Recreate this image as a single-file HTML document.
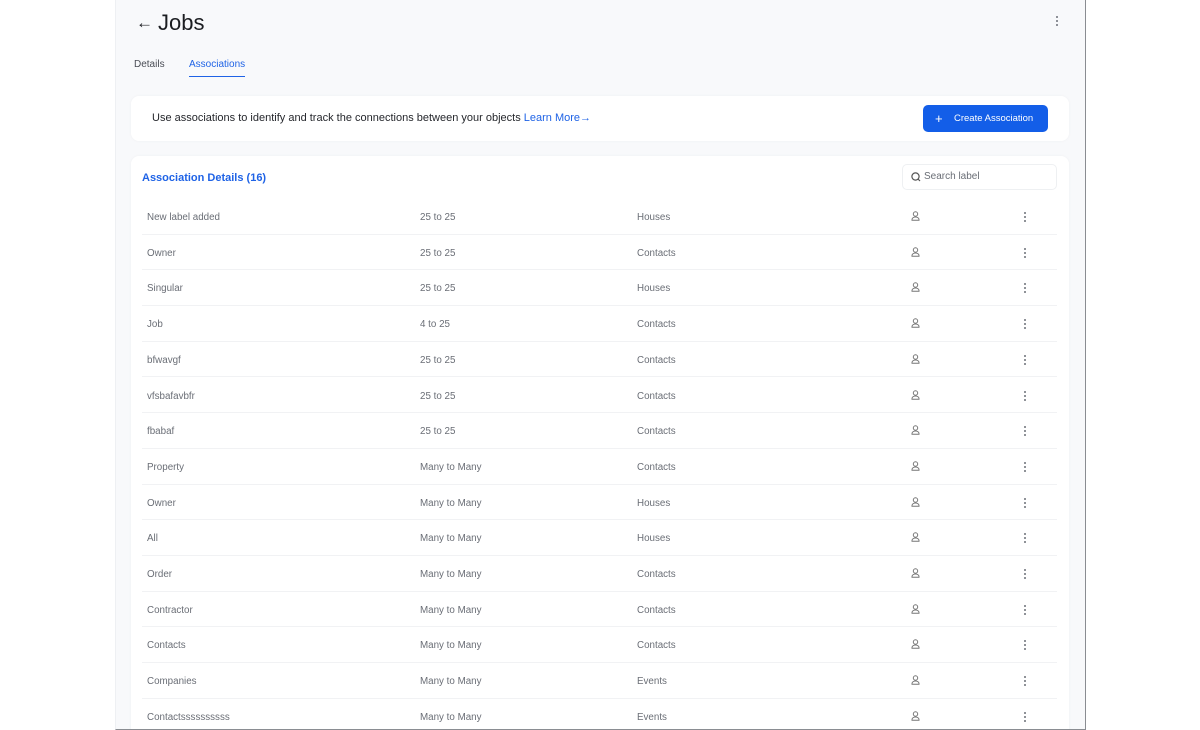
<!DOCTYPE html>
<html><head><meta charset="utf-8"><style>
*{margin:0;padding:0;box-sizing:border-box}
html,body{width:1200px;height:730px;overflow:hidden}
body{background:#fff;font-family:"Liberation Sans",sans-serif;position:relative}
.panel{position:absolute;left:115px;top:0;width:971px;height:730px;background:#f8f9fb;border-right:1.5px solid #8a8d92;border-bottom:1.5px solid #8a8d92;border-left:1px solid #eef0f3;overflow:hidden}
.title{position:absolute;left:20px;top:10px;font-size:22px;color:#1b1d21}
.title .ar{font-size:17px;margin-right:5px;position:relative;top:-2px}
.kebab{position:absolute;width:2px}
.kebab i{display:block;width:2px;height:2px;border-radius:1px;background:#6c7078;margin-bottom:2px}
.tab{position:absolute;top:59px;font-size:10px;color:#4a4d55}
.tab.act{color:#1f63e6;border-bottom:1.5px solid #1f63e6;padding-bottom:6px}
.card{position:absolute;background:#fff;border-radius:8px;box-shadow:0 0 3px rgba(0,0,0,.04)}
.info{left:15px;top:96px;width:938px;height:45px}
.info p{position:absolute;left:21px;top:16px;font-size:11px;color:#25272c}
.info p span{color:#1f63e6}
.btn{position:absolute;left:792px;top:9px;width:125px;height:27px;background:#135ee8;border-radius:5px;color:#fff;font-size:9.5px;line-height:27px}
.btn b{font-weight:normal;position:absolute;left:12px;font-size:13px}
.btn span{position:absolute;left:31px}
.tbl{left:15px;top:156px;width:938px;height:600px}
.tbl h2{position:absolute;left:11px;top:16px;font-size:11px;color:#1f63e6;font-weight:bold}
.search{position:absolute;left:771px;top:8px;width:155px;height:26px;border:1px solid #eef0f2;border-radius:5px;font-size:10px;color:#6a6e76;line-height:24px;padding-left:21px}
.search svg{position:absolute;left:8px;top:7px}
.row{position:absolute;left:11px;width:915px;height:35.7px;border-bottom:1px solid #f1f2f4;font-size:9.8px;color:#6a6e76}
.row span{position:absolute;top:13px}
.row svg{position:absolute;left:769px;top:12px}
.row .kebab{left:882px;top:13px}
</style></head><body>
<div class="panel">
<div class="title"><span class="ar">&#8592;</span>Jobs</div>
<div class="kebab" style="left:940px;top:16px"><i></i><i></i><i></i></div>
<div class="tab" style="left:18px">Details</div>
<div class="tab act" style="left:73px">Associations</div>
<div class="card info"><p>Use associations to identify and track the connections between your objects <span>Learn More&#8594;</span></p>
<div class="btn"><b>+</b><span>Create Association</span></div></div>
<div class="card tbl"><h2>Association Details (16)</h2>
<div class="search"><svg width="10" height="10" viewBox="0 0 10 10"><circle cx="4.5" cy="4.5" r="3.6" fill="none" stroke="#555" stroke-width="1.2"/><path d="M7 7l2 2" stroke="#555" stroke-width="1.2"/></svg>Search label</div>
ROWS
</div>
</div>
<script>
var d=[["New label added","25 to 25","Houses"],["Owner","25 to 25","Contacts"],["Singular","25 to 25","Houses"],["Job","4 to 25","Contacts"],["bfwavgf","25 to 25","Contacts"],["vfsbafavbfr","25 to 25","Contacts"],["fbabaf","25 to 25","Contacts"],["Property","Many to Many","Contacts"],["Owner","Many to Many","Houses"],["All","Many to Many","Houses"],["Order","Many to Many","Contacts"],["Contractor","Many to Many","Contacts"],["Contacts","Many to Many","Contacts"],["Companies","Many to Many","Events"],["Contactssssssssss","Many to Many","Events"]];
var h="";d.forEach(function(r,i){h+='<div class="row" style="top:'+(43+i*35.7)+'px"><span style="left:5px">'+r[0]+'</span><span style="left:278px">'+r[1]+'</span><span style="left:495px">'+r[2]+'</span><svg width="9" height="10" viewBox="0 0 9 10"><circle cx="4.5" cy="3" r="2.2" fill="none" stroke="#777" stroke-width="1"/><path d="M1 9.3h7v-.8c0-1.4-1.5-2.5-3.5-2.5S1 7.1 1 8.5z" fill="none" stroke="#777" stroke-width="1"/></svg><div class="kebab"><i></i><i></i><i></i></div></div>'});
document.querySelector('.tbl').innerHTML=document.querySelector('.tbl').innerHTML.replace('ROWS',h);
</script>
</body></html>
